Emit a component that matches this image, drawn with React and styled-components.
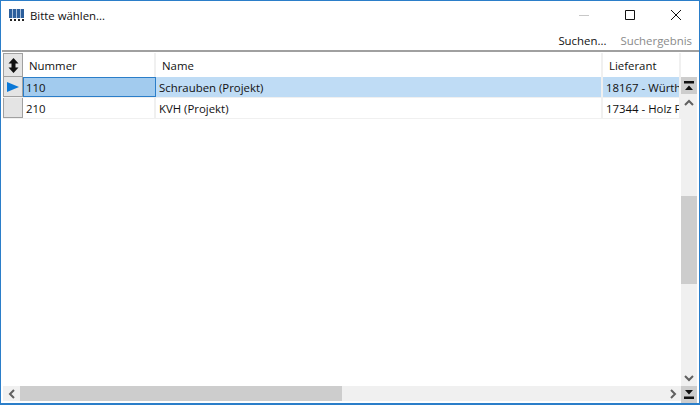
import { createGlobalStyle, styled } from "styled-components";

const GlobalStyle = createGlobalStyle`
  html, body {
    margin: 0;
    padding: 0;
    background: #fff;
  }
  * {
    box-sizing: border-box;
  }
`;

const columns = [
  { title: "Nummer", width: 133 },
  { title: "Name", width: 447 },
  { title: "Lieferant", width: 78 },
];

const rows = [
  { id: 1, cells: ["110", "Schrauben (Projekt)", "18167 - Würth"], selected: true },
  { id: 2, cells: ["210", "KVH (Projekt)", "17344 - Holz F"] },
];

const AppIcon = () => (
  <svg width="15" height="12" viewBox="0 0 15 12">
    <rect x="0" y="0" width="15" height="9" fill="#a9c0dc" />
    {[0, 4, 8, 12].map((x) => (
      <g key={x}>
        <rect x={x} y="0" width="3" height="9" fill="#2c5f9c" />
        <rect x={x + 1} y="10" width="2" height="2" fill="#222" />
      </g>
    ))}
  </svg>
);

const MinimizeIcon = () => (
  <svg width="10" height="10" viewBox="0 0 10 10">
    <path d="M0 5.5H10" stroke="#c8c8c8" />
  </svg>
);

const MaximizeIcon = () => (
  <svg width="10" height="10" viewBox="0 0 10 10">
    <path d="M.5.5H9.5V9.5H.5Z" fill="none" stroke="#111" />
  </svg>
);

const CloseIcon = () => (
  <svg width="10" height="10" viewBox="0 0 10 10">
    <path d="M0 0L10 10M10 0L0 10" stroke="#111" />
  </svg>
);

const SortIcon = () => (
  <svg width="11" height="15" viewBox="0 0 11 15">
    <path d="M5.5 0L10.5 5.5H7.5V9.5H10.5L5.5 15L.5 9.5H3.5V5.5H.5Z" fill="#111" />
  </svg>
);

const Arrow = ({ dir }) => {
  const paths = {
    up: "M1 6L5 2L9 6",
    down: "M1 2L5 6L9 2",
    left: "M6 1L2 5L6 9",
    right: "M2 1L6 5L2 9",
  };
  const wide = dir === "up" || dir === "down";
  return (
    <svg width={wide ? 10 : 8} height={wide ? 8 : 10} viewBox={wide ? "0 0 10 8" : "0 0 8 10"}>
      <path d={paths[dir]} fill="none" stroke="#606060" strokeWidth="2" />
    </svg>
  );
};

const EndIcon = ({ flip }) => (
  <svg width="10" height="9" viewBox="0 0 10 9">
    {flip ? (
      <path d="M1 0H9L5 4.5ZM0 6.5H10V9H0Z" fill="#111" />
    ) : (
      <path d="M0 0H10V2.5H0ZM5 4.5L9 9H1Z" fill="#111" />
    )}
  </svg>
);

export default function App() {
  return (
    <>
      <GlobalStyle />
      <Window>
        <TitleBar>
          <AppIcon />
          <Title>Bitte wählen...</Title>
          <WindowButtons>
            <WindowButton>
              <MinimizeIcon />
            </WindowButton>
            <WindowButton>
              <MaximizeIcon />
            </WindowButton>
            <WindowButton>
              <CloseIcon />
            </WindowButton>
          </WindowButtons>
        </TitleBar>
        <Toolbar>
          <ToolLink>Suchen...</ToolLink>
          <ToolLink $disabled>Suchergebnis</ToolLink>
        </Toolbar>
        <Grid>
          <GridBody>
            <Table>
              <HeaderRow>
                <SortCorner>
                  <SortIcon />
                </SortCorner>
                {columns.map((col) => (
                  <HeaderCell key={col.title} $width={col.width}>
                    {col.title}
                  </HeaderCell>
                ))}
              </HeaderRow>
              {rows.map((row) => (
                <Row key={row.id}>
                  <RowSelector>
                    {row.selected && (
                      <svg width="12" height="10" viewBox="0 0 12 10">
                        <path d="M0 0L12 5L0 10Z" fill="#0a78d7" />
                      </svg>
                    )}
                  </RowSelector>
                  {row.cells.map((cell, i) => (
                    <Cell
                      key={cell}
                      $width={columns[i].width}
                      $selected={row.selected}
                      $active={row.selected && i === 0}
                    >
                      {cell}
                    </Cell>
                  ))}
                </Row>
              ))}
            </Table>
            <VScroll>
              <EndButton>
                <EndIcon />
              </EndButton>
              <ArrowButton>
                <Arrow dir="up" />
              </ArrowButton>
              <VTrack>
                <VThumb />
              </VTrack>
              <ArrowButton>
                <Arrow dir="down" />
              </ArrowButton>
            </VScroll>
          </GridBody>
          <HScroll>
            <HArrowButton>
              <Arrow dir="left" />
            </HArrowButton>
            <HTrack>
              <HThumb />
            </HTrack>
            <HArrowButton>
              <Arrow dir="right" />
            </HArrowButton>
            <EndButton>
              <EndIcon flip />
            </EndButton>
          </HScroll>
        </Grid>
      </Window>
    </>
  );
}

const Window = styled.div`
  width: 700px;
  height: 405px;
  display: flex;
  flex-direction: column;
  background: #fff;
  border: 1px solid #2b7ec9;
  border-bottom-width: 2px;
  padding-bottom: 2px;
  font-family: "Open Sans", "Noto Sans", sans-serif;
  font-size: 11.4px;
  color: #111;
  overflow: hidden;
`;

const TitleBar = styled.div`
  height: 29px;
  display: flex;
  align-items: center;
  padding: 0 0 1px 8px;
`;

const Title = styled.div`
  margin-left: 6px;
`;

const WindowButtons = styled.div`
  margin-left: auto;
  display: flex;
`;

const WindowButton = styled.div`
  width: 46px;
  height: 28px;
  display: flex;
  align-items: center;
  justify-content: center;
`;

const Toolbar = styled.div`
  height: 20px;
  display: flex;
  justify-content: flex-end;
  align-items: center;
  gap: 14px;
  padding-right: 7px;
`;

const ToolLink = styled.span`
  color: ${(p) => (p.$disabled ? "#8a8a8a" : "#111")};
`;

const Grid = styled.div`
  flex: 1;
  min-height: 0;
  display: flex;
  flex-direction: column;
  margin-left: 1px;
  padding: 0 2px 0 1px;
  border-top: 2px solid #a0a0a0;
`;

const GridBody = styled.div`
  flex: 1;
  min-height: 0;
  display: flex;
`;

const Table = styled.div`
  flex: 1;
  min-width: 0;
  overflow: hidden;
`;

const HeaderRow = styled.div`
  height: 25px;
  display: flex;
  padding-top: 1px;
`;

const SortCorner = styled.div`
  width: 20px;
  flex: none;
  display: flex;
  align-items: center;
  justify-content: center;
  background: #e4e4e4;
  border: 1px solid #a0a0a0;
`;

const HeaderCell = styled.div`
  width: ${(p) => p.$width}px;
  flex: none;
  display: flex;
  align-items: center;
  padding-left: 6px;
  border-right: 2px solid #f0f0f0;
`;

const Row = styled.div`
  height: 21px;
  display: flex;
  border-bottom: 1px solid #f0f0f0;
`;

const RowSelector = styled.div`
  width: 20px;
  flex: none;
  display: flex;
  align-items: center;
  justify-content: center;
  background: #e4e4e4;
  border-left: 1px solid #a0a0a0;
  border-right: 1px solid #a0a0a0;
  border-bottom: 1px solid #a0a0a0;
`;

const Cell = styled.div`
  width: ${(p) => p.$width}px;
  flex: none;
  display: flex;
  align-items: center;
  padding-left: ${(p) => (p.$active ? 2 : 3)}px;
  white-space: nowrap;
  overflow: hidden;
  background: ${(p) => (p.$active ? "#a2cbee" : p.$selected ? "#bfdcf5" : "#fff")};
  border: ${(p) => (p.$active ? "1px solid #2b7ec9" : "none")};
  border-right: ${(p) => (p.$active ? "1px solid #2b7ec9" : "2px solid #f0f0f0")};
`;

const VScroll = styled.div`
  width: 16px;
  flex: none;
  display: flex;
  flex-direction: column;
  background: #f0f0f0;
  margin-top: 25px;
`;

const EndButton = styled.div`
  width: 16px;
  height: 17px;
  flex: none;
  display: flex;
  align-items: center;
  justify-content: center;
  background: #cdcdcd;
`;

const ArrowButton = styled.div`
  height: 17px;
  flex: none;
  display: flex;
  align-items: center;
  justify-content: center;
`;

const VTrack = styled.div`
  flex: 1;
  padding-top: 85px;
`;

const VThumb = styled.div`
  height: 88px;
  background: #cdcdcd;
`;

const HScroll = styled.div`
  height: 15px;
  flex: none;
  display: flex;
  background: #f0f0f0;
`;

const HArrowButton = styled.div`
  width: 17px;
  flex: none;
  display: flex;
  align-items: center;
  justify-content: center;
`;

const HTrack = styled.div`
  flex: 1;
`;

const HThumb = styled.div`
  width: 322px;
  height: 100%;
  background: #cdcdcd;
`;
